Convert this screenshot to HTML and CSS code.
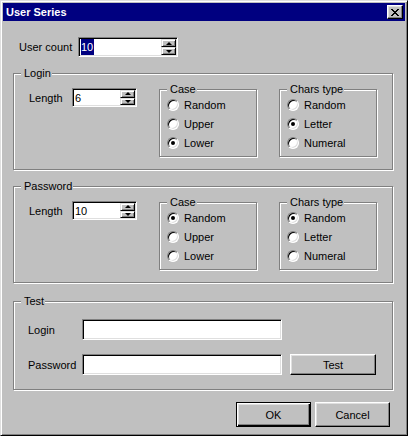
FILE: index.html
```html
<!DOCTYPE html>
<html>
  <head>
    <meta charset="utf-8" />
    <link rel="stylesheet" href="styles.css">
  </head>
  <body>
    <div class="window">
      <div class="titlebar">
        <span class="title">User Series</span>
        <span class="close-btn">
          <svg width="8" height="7" viewBox="0 0 8 7" shape-rendering="crispEdges">
            <path d="M0 0h2v1H0zM6 0h2v1H6zM1 1h2v1H1zM5 1h2v1H5zM2 2h4v1H2zM3 3h2v1H3zM2 4h4v1H2zM1 5h2v1H1zM5 5h2v1H5zM0 6h2v1H0zM6 6h2v1H6z" fill="#000"/>
          </svg>
        </span>
      </div>
      <div class="content">
        <div class="count-row">
          <label class="count-label">User count</label>
          <div class="spin spin-count">
            <span class="spin-value"><span class="selected">10</span></span>
            <span class="spin-arrows"><span class="arrow up"></span><span class="arrow down"></span></span>
          </div>
        </div>

        <fieldset class="group">
          <legend>Login</legend>
          <div class="group-row">
            <div class="length">
              <label>Length</label>
              <div class="spin spin-len">
                <span class="spin-value">6</span>
                <span class="spin-arrows"><span class="arrow up"></span><span class="arrow down"></span></span>
              </div>
            </div>
            <fieldset class="sub">
              <legend>Case</legend>
              <div class="radio-list">
                <div class="radio-row"><span class="radio"></span>Random</div>
                <div class="radio-row"><span class="radio"></span>Upper</div>
                <div class="radio-row"><span class="radio on"></span>Lower</div>
              </div>
            </fieldset>
            <fieldset class="sub chars">
              <legend>Chars type</legend>
              <div class="radio-list">
                <div class="radio-row"><span class="radio"></span>Random</div>
                <div class="radio-row"><span class="radio on"></span>Letter</div>
                <div class="radio-row"><span class="radio"></span>Numeral</div>
              </div>
            </fieldset>
          </div>
        </fieldset>

        <fieldset class="group">
          <legend>Password</legend>
          <div class="group-row">
            <div class="length">
              <label>Length</label>
              <div class="spin spin-len">
                <span class="spin-value">10</span>
                <span class="spin-arrows"><span class="arrow up"></span><span class="arrow down"></span></span>
              </div>
            </div>
            <fieldset class="sub">
              <legend>Case</legend>
              <div class="radio-list">
                <div class="radio-row"><span class="radio on"></span>Random</div>
                <div class="radio-row"><span class="radio"></span>Upper</div>
                <div class="radio-row"><span class="radio"></span>Lower</div>
              </div>
            </fieldset>
            <fieldset class="sub chars">
              <legend>Chars type</legend>
              <div class="radio-list">
                <div class="radio-row"><span class="radio on"></span>Random</div>
                <div class="radio-row"><span class="radio"></span>Letter</div>
                <div class="radio-row"><span class="radio"></span>Numeral</div>
              </div>
            </fieldset>
          </div>
        </fieldset>

        <fieldset class="group test">
          <legend>Test</legend>
          <div class="test-row first">
            <label>Login</label>
            <span class="edit"></span>
          </div>
          <div class="test-row">
            <label>Password</label>
            <span class="edit"></span>
            <button class="btn test-btn">Test</button>
          </div>
        </fieldset>

        <div class="dialog-buttons">
          <button class="btn default">OK</button>
          <button class="btn">Cancel</button>
        </div>
      </div>
    </div>
  </body>
</html>
```

FILE: styles.css
```css
* {
  box-sizing: border-box;
}
body {
  margin: 0;
  font-family: "Liberation Sans", Arial, sans-serif;
  font-size: 11px;
  color: #000;
  background: #c0c0c0;
}

.window {
  width: 408px;
  height: 436px;
  padding: 2px;
  background: #c0c0c0;
  border: 1px solid;
  border-color: #dfdfdf #000 #000 #dfdfdf;
  box-shadow: inset 1px 1px #fff, inset -1px -1px #808080;
}
.titlebar {
  height: 18px;
  display: flex;
  align-items: center;
  justify-content: space-between;
  padding: 0 2px 0 3px;
  background: #000080;
}
.title {
  color: #fff;
  font-weight: bold;
}
.close-btn {
  width: 16px;
  height: 14px;
  display: flex;
  align-items: center;
  justify-content: center;
  background: #c0c0c0;
  border: 1px solid;
  border-color: #fff #000 #000 #fff;
  box-shadow: inset -1px -1px #808080, inset 1px 1px #dfdfdf;
}

.content {
  padding: 0 12px 0 10px;
}
.count-row {
  display: flex;
  align-items: center;
  margin-top: 16px;
  padding-left: 6px;
}
.count-label {
  width: 59px;
}

/* sunken edit + spinner */
.spin,
.edit {
  display: flex;
  background: #fff;
  border: 1px solid;
  border-color: #808080 #fff #fff #808080;
  box-shadow: inset 1px 1px #000, inset -1px -1px #dfdfdf;
  padding: 1px;
}
.spin-count {
  width: 100px;
  height: 20px;
}
.spin-len {
  width: 65px;
  height: 19px;
}
.spin-value {
  flex: 1;
  display: flex;
  align-items: center;
  padding-left: 1px;
}
.selected {
  background: #000080;
  color: #fff;
  line-height: 16px;
  padding-right: 1px;
}
.spin-arrows {
  width: 15px;
  display: flex;
  flex-direction: column;
}
.arrow {
  flex: 1;
  display: flex;
  align-items: center;
  justify-content: center;
  background: #c0c0c0;
  border: 1px solid;
  border-color: #dfdfdf #000 #000 #dfdfdf;
  box-shadow: inset 1px 1px #fff, inset -1px -1px #808080;
}
.arrow::before {
  content: "";
  width: 0;
  height: 0;
  border-left: 3px solid transparent;
  border-right: 3px solid transparent;
}
.arrow.up::before {
  border-bottom: 3px solid #000;
}
.arrow.down::before {
  border-top: 3px solid #000;
}

/* group boxes */
fieldset {
  min-width: 0;
  border: 1px solid #808080;
  box-shadow: inset 1px 1px #fff, 1px 1px #fff;
}
legend {
  line-height: 13px;
  padding: 0 1px 0 3px;
  background: #c0c0c0;
}
.group {
  width: 380px;
  height: 103px;
  margin: 10px 0 0;
  padding: 0;
}
.group > legend {
  margin-left: 7px;
}
.group-row {
  display: flex;
  align-items: flex-start;
  padding-left: 15px;
}
.length {
  width: 130px;
  display: flex;
  align-items: center;
  margin-top: 8px;
}
.length label {
  width: 43px;
}
.sub {
  width: 98px;
  height: 74px;
  margin: 3px 0 0;
  padding: 0 0 0 7px;
}
.sub.chars {
  margin-left: 22px;
}
.radio-list {
  margin-top: -1px;
}
.radio-row {
  height: 19px;
  display: flex;
  align-items: center;
  gap: 5px;
}
.radio {
  width: 12px;
  height: 12px;
  display: flex;
  align-items: center;
  justify-content: center;
  border-radius: 50%;
  background: #fff;
  border: 1px solid;
  border-color: #808080 #fff #fff #808080;
  box-shadow: inset 1px 1px #000, inset -1px -1px #dfdfdf;
}
.radio.on::after {
  content: "";
  width: 4px;
  height: 4px;
  border-radius: 50%;
  background: #000;
}

.group.test {
  height: 95px;
  margin-top: 12px;
}
.test-row {
  display: flex;
  align-items: center;
  padding-left: 14px;
  margin-top: 14px;
}
.test-row.first {
  margin-top: 11px;
}
.test-row label {
  width: 54px;
}
.edit {
  width: 200px;
  height: 21px;
}

/* push buttons */
.btn {
  width: 75px;
  height: 25px;
  padding: 0;
  font: inherit;
  color: #000;
  background: #c0c0c0;
  border: 1px solid;
  border-color: #fff #000 #000 #fff;
  box-shadow: inset -1px -1px #808080, inset 1px 1px #dfdfdf;
}
.btn.default {
  border-color: #000;
  box-shadow: inset 1px 1px #fff, inset -1px -1px #000, inset -2px -2px #808080, inset 2px 2px #dfdfdf;
}
.test-btn {
  width: 86px;
  height: 21px;
  margin-left: 8px;
}
.dialog-buttons {
  display: flex;
  justify-content: flex-end;
  gap: 4px;
  margin: 12px 3px 0 0;
}
```
